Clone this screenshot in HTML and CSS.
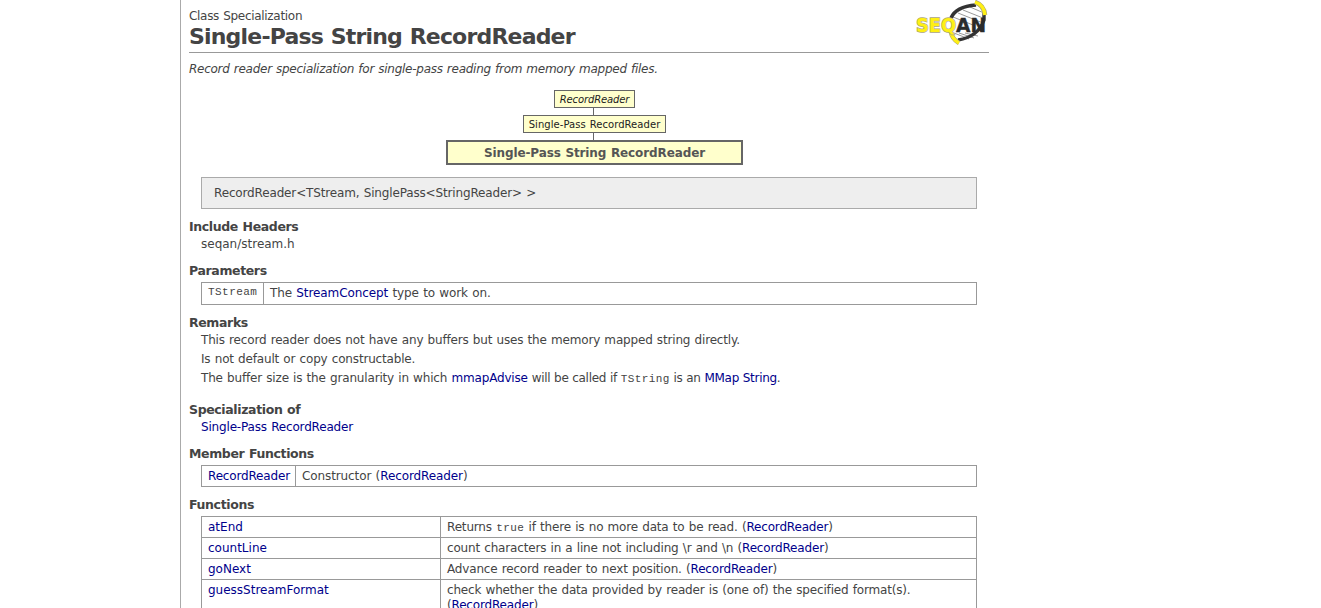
FILE: index.html
```html
<!DOCTYPE html>
<html lang="en">
<head>
<meta charset="utf-8">
<title>Single-Pass String RecordReader</title>
<link rel="stylesheet" href="styles.css">
</head>
<body>
<main class="page">
  <header class="header">
    <div class="titles">
      <div class="kind">Class Specialization</div>
      <h1 class="title">Single-Pass String RecordReader</h1>
    </div>
    <svg class="logo" width="72" height="46" viewBox="0 0 72 46" role="img" aria-label="SeqAn">
      <path d="M47 10l20 8M42 13l25 10M37 17l20 8M54 7l14 6M38 33l15 6M43 33l15 5M49 33l13 3" stroke="#999" stroke-width="1" fill="none"/>
      <path d="M35 18C38 11 46 6 60 5" fill="none" stroke="#333" stroke-width="3.6"/>
      <path d="M42 40Q62 37 68 20V12" fill="none" stroke="#333" stroke-width="3.4"/>
      <path d="M59 2Q68 5 69 15" fill="none" stroke="#aaa37a" stroke-width="4.6"/>
      <path d="M59 2Q68 5 69 15" fill="none" stroke="#fff014" stroke-width="3.4"/>
      <path d="M35 32Q36 39 43 43" fill="none" stroke="#aaa37a" stroke-width="4.6"/>
      <path d="M35 32Q36 39 43 43" fill="none" stroke="#fff014" stroke-width="3.4"/>
      <text class="logo-seq logo-edge" x="0" y="32" textLength="40" lengthAdjust="spacingAndGlyphs">SEQ</text>
      <text class="logo-an" x="40" y="32" textLength="30" lengthAdjust="spacingAndGlyphs">AN</text>
    </svg>
  </header>
  <p class="summary">Record reader specialization for single-pass reading from memory mapped files.</p>

  <div class="tree">
    <div class="node node-root">RecordReader</div>
    <div class="link"></div>
    <div class="node node-parent">Single-Pass RecordReader</div>
    <div class="link"></div>
    <div class="node node-self">Single-Pass String RecordReader</div>
  </div>

  <div class="signature">RecordReader&lt;TStream, SinglePass&lt;StringReader&gt; &gt;</div>

  <section class="section">
    <h2 class="heading">Include Headers</h2>
    <p class="text header-file">seqan/stream.h</p>
  </section>

  <section class="section">
    <h2 class="heading">Parameters</h2>
    <div class="table params">
      <div class="row"><div class="cell"><code>TStream</code></div><div class="cell">The <a>StreamConcept</a> type to work on.</div></div>
    </div>
  </section>

  <section class="section remarks">
    <h2 class="heading">Remarks</h2>
    <p class="text">This record reader does not have any buffers but uses the memory mapped string directly.</p>
    <p class="text">Is not default or copy constructable.</p>
    <p class="text">The buffer size is the granularity in which <a>mmapAdvise</a><span class="tight"> will be called if <code>TString</code> is an <a>MMap String</a>.</span></p>
  </section>

  <section class="section">
    <h2 class="heading">Specialization of</h2>
    <p class="text"><a>Single-Pass RecordReader</a></p>
  </section>

  <section class="section">
    <h2 class="heading">Member Functions</h2>
    <div class="table members">
      <div class="row"><div class="cell"><a>RecordReader</a></div><div class="cell">Constructor (<a>RecordReader</a>)</div></div>
    </div>
  </section>

  <section class="section">
    <h2 class="heading">Functions</h2>
    <div class="table functions">
      <div class="row"><div class="cell"><a>atEnd</a></div><div class="cell">Returns <code>true</code> if there is no more data to be read. (<a>RecordReader</a>)</div></div>
      <div class="row"><div class="cell"><a>countLine</a></div><div class="cell">count characters in a line not including \r and \n (<a>RecordReader</a>)</div></div>
      <div class="row"><div class="cell"><a>goNext</a></div><div class="cell">Advance record reader to next position. (<a>RecordReader</a>)</div></div>
      <div class="row"><div class="cell"><a>guessStreamFormat</a></div><div class="cell">check whether the data provided by reader is (one of) the specified format(s).<br>(<a>RecordReader</a>)</div></div>
    </div>
  </section>
</main>
</body>
</html>
```
FILE: styles.css
```css
* { box-sizing: border-box; }
html, body { height: 100%; }
body {
  margin: 0;
  overflow: hidden;
  background: #fff;
  color: #444;
  font: 12px/17px Verdana, "DejaVu Sans", sans-serif;
  letter-spacing: -.17px;
  word-spacing: .6px;
}
h1, h2, p { margin: 0; }
a { color: #00008b; }
code {
  font: 11px/12px "Courier New", "Liberation Mono", monospace;
  letter-spacing: .45px;
}
.page {
  width: 809px;
  height: 608px;
  margin-left: 180px;
  padding-left: 8px;
  border-left: 1px solid #aaa;
  overflow: hidden;
}
.header {
  display: flex;
  justify-content: space-between;
  height: 53px;
  padding-top: 8px;
  border-bottom: 1px solid #999;
}
.kind { line-height: 16px; letter-spacing: -.3px; }
.title {
  font-size: 22px;
  line-height: 25px;
  letter-spacing: -.81px;
  word-spacing: .8px;
  white-space: nowrap;
}
.logo { margin: -8px 1px 0 0; letter-spacing: 0; }
.logo-seq, .logo-an {
  font-family: "DejaVu Sans", sans-serif;
  font-weight: bold;
  font-size: 20px;
}
.logo-seq { fill: #fff014; }
.logo-edge { stroke: #aaa37a; stroke-width: 1.4px; paint-order: stroke; }
.logo-an { fill: #2b2b2b; stroke: #2b2b2b; stroke-width: .4px; }
.summary { margin-top: 8px; font-style: italic; letter-spacing: -.26px; }
.tree {
  display: flex;
  flex-direction: column;
  align-items: center;
  margin: 12px 0 12px;
  width: 811px;
}
.node {
  border: 1px solid #666;
  background: #ffc;
  color: #222;
  height: 18px;
  font-size: 10px;
  line-height: 17px;
  text-align: center;
  white-space: nowrap;
}
.node-root { width: 81px; font-style: italic; letter-spacing: -.13px; }
.node-parent { width: 143px; letter-spacing: .06px; }
.node-self {
  width: 297px;
  height: 25px;
  border-width: 2px;
  color: #555;
  font-size: 12px;
  font-weight: bold;
  line-height: 22px;
  letter-spacing: -.11px;
}
.link { width: 1px; height: 7px; margin-right: 2px; background: #666; }
.signature {
  height: 32px;
  margin: 0 12px 9px;
  padding-left: 12px;
  border: 1px solid #aaa;
  background: #eee;
  line-height: 30px;
  letter-spacing: -.15px;
}
.section { margin-bottom: 9px; }
.heading { font-size: 12.5px; line-height: 17px; letter-spacing: -.37px; }
.text { margin-left: 12px; white-space: nowrap; }
.header-file { letter-spacing: 0; }
.heading + .text { margin-top: 1px; }
.text + .text { margin-top: 2px; }
.tight { letter-spacing: -.3px; word-spacing: .3px; }
.tight code { letter-spacing: .4px; }
.remarks { margin-bottom: 14px; }
.table {
  margin: 3px 12px 0;
  border: 1px solid #999;
  border-bottom: 0;
}
.row { display: grid; border-bottom: 1px solid #999; }
.cell { padding: 3px 6px 2px; line-height: 15px; white-space: nowrap; }
.cell + .cell { border-left: 1px solid #999; }
.params .row { grid-template-columns: 61px 1fr; }
.params .cell { padding-bottom: 3px; letter-spacing: -.1px; }
.params .cell:first-child { padding-top: 1px; }
.members .row { grid-template-columns: 93px 1fr; }
.members .cell + .cell { letter-spacing: -.1px; }
.functions .row { grid-template-columns: 238px 1fr; }
.functions .cell:first-child { letter-spacing: 0; }
```
